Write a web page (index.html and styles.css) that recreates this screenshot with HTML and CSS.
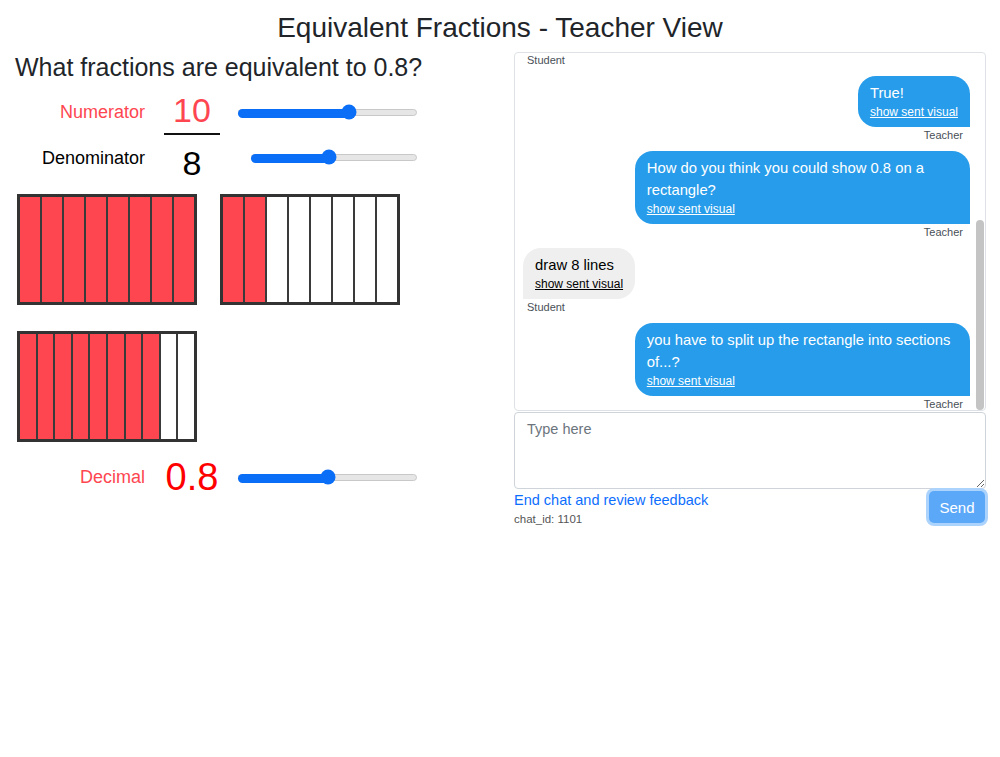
FILE: index.html
```html
<!DOCTYPE html>
<html>
<head>
    <link rel="stylesheet" href="styles.css">
</head>
<body>
    <h1 class="page-title">Equivalent Fractions - Teacher View</h1>

    <div class="main">
        <!-- Left side: fraction controls and bar models -->
        <div class="fraction-panel">
            <h2 class="question">What fractions are equivalent to 0.8?</h2>

            <div class="frac-row num-row">
                <div class="frac-label red-label">Numerator</div>
                <div class="frac-value num-value">10</div>
                <div class="slider-wrap num-slider">
                    <div class="slider">
                        <div class="slider-fill" style="width: 62%"></div>
                        <div class="slider-thumb" style="left: 62%"></div>
                    </div>
                </div>
            </div>
            <div class="frac-line"></div>
            <div class="frac-row den-row">
                <div class="frac-label">Denominator</div>
                <div class="frac-value den-value">8</div>
                <div class="slider-wrap den-slider">
                    <div class="slider">
                        <div class="slider-fill" style="width: 47%"></div>
                        <div class="slider-thumb" style="left: 47%"></div>
                    </div>
                </div>
            </div>

            <div class="bars">
                <div class="bar">
                    <div class="cell on"></div><div class="cell on"></div><div class="cell on"></div><div class="cell on"></div>
                    <div class="cell on"></div><div class="cell on"></div><div class="cell on"></div><div class="cell on"></div>
                </div>
                <div class="bar">
                    <div class="cell on"></div><div class="cell on"></div><div class="cell"></div><div class="cell"></div>
                    <div class="cell"></div><div class="cell"></div><div class="cell"></div><div class="cell"></div>
                </div>
                <div class="bar">
                    <div class="cell on"></div><div class="cell on"></div><div class="cell on"></div><div class="cell on"></div>
                    <div class="cell on"></div><div class="cell on"></div><div class="cell on"></div><div class="cell on"></div>
                    <div class="cell"></div><div class="cell"></div>
                </div>
            </div>

            <div class="frac-row dec-row">
                <div class="frac-label red-label">Decimal</div>
                <div class="frac-value dec-value">0.8</div>
                <div class="slider-wrap dec-slider">
                    <div class="slider">
                        <div class="slider-fill" style="width: 50%"></div>
                        <div class="slider-thumb" style="left: 50%"></div>
                    </div>
                </div>
            </div>
        </div>

        <!-- Right side: chat with the student -->
        <div class="chat-panel">
            <div class="chat-box">
                <div class="chat-scroll">
                    <div class="msg student">
                        <div class="sender first">Student</div>
                    </div>
                    <div class="msg teacher">
                        <div class="bubble">
                            <div class="bubble-text">True!</div>
                            <a class="visual-link">show sent visual</a>
                        </div>
                        <div class="sender">Teacher</div>
                    </div>
                    <div class="msg teacher">
                        <div class="bubble">
                            <div class="bubble-text">How do you think you could show 0.8 on a rectangle?</div>
                            <a class="visual-link">show sent visual</a>
                        </div>
                        <div class="sender">Teacher</div>
                    </div>
                    <div class="msg student">
                        <div class="bubble">
                            <div class="bubble-text">draw 8 lines</div>
                            <a class="visual-link">show sent visual</a>
                        </div>
                        <div class="sender">Student</div>
                    </div>
                    <div class="msg teacher">
                        <div class="bubble">
                            <div class="bubble-text">you have to split up the rectangle into sections of...?</div>
                            <a class="visual-link">show sent visual</a>
                        </div>
                        <div class="sender">Teacher</div>
                    </div>
                </div>
                <div class="scroll-thumb"></div>
            </div>

            <textarea class="chat-input" placeholder="Type here"></textarea>

            <div class="chat-footer">
                <div>
                    <a class="end-link" href="#">End chat and review feedback</a>
                    <div class="chat-id">chat_id: 1101</div>
                </div>
                <button class="send-btn">Send</button>
            </div>
        </div>
    </div>
</body>
</html>
```

FILE: styles.css
```css
body {
    margin: 0;
    font-family: "Liberation Sans", Arial, sans-serif;
    color: #212529;
    background: #fff;
}

.page-title {
    font-size: 28px;
    font-weight: normal;
    line-height: 34px;
    text-align: center;
    margin: 11px 0 7px;
}

.main {
    display: grid;
    grid-template-columns: 500px 472px;
    column-gap: 14px;
}

/* ---------- fraction side ---------- */

.question {
    font-size: 25px;
    font-weight: normal;
    line-height: 30px;
    margin: 0 0 0 15px;
}

.frac-row {
    display: flex;
    align-items: flex-start;
}

.num-row {
    margin-top: 6px;
    height: 44px;
}

.frac-label {
    width: 145px;
    text-align: right;
    font-size: 18px;
    line-height: 44px;
    color: #000;
}

.red-label {
    color: #fe4651;
}

.num-row .frac-label {
    padding-top: 2px;
}

.den-row .frac-label {
    padding-top: 1px;
}

.frac-value {
    width: 56px;
    margin-left: 19px;
    text-align: center;
    font-size: 34px;
    line-height: 44px;
}

.num-value {
    color: #fe4651;
}

.den-value {
    color: #000;
    padding-top: 6px;
}

.frac-line {
    width: 56px;
    height: 2px;
    background: #111;
    margin: 1px 0 0 164px;
}

.slider-wrap {
    height: 44px;
    box-sizing: border-box;
    display: flex;
    align-items: center;
}

.num-slider {
    margin-left: 18px;
    width: 179px;
    padding-top: 4px;
}

.den-slider {
    margin-left: 31px;
    width: 166px;
}

.dec-slider {
    margin-left: 18px;
    width: 179px;
    height: 50px;
}

.slider {
    position: relative;
    width: 100%;
    height: 7px;
    box-sizing: border-box;
    background: #e6e6e6;
    border: 1px solid #c8c8c8;
    border-radius: 4px;
}

.slider-fill {
    height: 9px;
    margin: -1px 0 0 -1px;
    background: #0b6ef6;
    border-radius: 5px;
}

.slider-thumb {
    position: absolute;
    top: 50%;
    width: 15px;
    height: 15px;
    border-radius: 50%;
    background: #0b6ef6;
    transform: translate(-50%, -50%);
}

.bars {
    display: grid;
    grid-template-columns: 180px 180px;
    column-gap: 23px;
    row-gap: 26px;
    margin: 9px 0 0 17px;
}

.bar {
    height: 111px;
    box-sizing: border-box;
    border: 3px solid #333;
    background: #3a3a3a;
    display: flex;
    gap: 2px;
}

.cell {
    flex: 1;
    background: #fff;
}

.cell.on {
    background: #fe4651;
}

.dec-row {
    margin-top: 10px;
}

.dec-row .frac-label {
    line-height: 50px;
}

.dec-value {
    font-size: 38px;
    line-height: 50px;
    color: #ff0000;
}

/* ---------- chat side ---------- */

.chat-box {
    position: relative;
    height: 359px;
    box-sizing: border-box;
    border: 1px solid #dee2e6;
    border-radius: 4px;
    overflow: hidden;
}

.chat-scroll {
    padding: 0 15px 0 8px;
}

.msg {
    display: flex;
    flex-direction: column;
    margin-bottom: 8px;
}

.msg.teacher {
    align-items: flex-end;
}

.msg.student {
    align-items: flex-start;
}

.bubble {
    max-width: 75%;
    box-sizing: border-box;
    padding: 6px 12px 7px 12px;
    font-size: 14.8px;
}

.teacher .bubble {
    background: #269cea;
    color: #fff;
    border-radius: 18px 18px 0 18px;
}

.student .bubble {
    background: #efefef;
    color: #000;
    border-radius: 18px 18px 18px 0;
}

.bubble-text {
    line-height: 22px;
}

.visual-link {
    display: block;
    font-size: 12px;
    line-height: 16px;
    text-decoration: underline;
    cursor: pointer;
}

.sender {
    font-size: 11px;
    line-height: 16px;
    color: #495057;
}

.teacher .sender {
    padding-right: 7px;
}

.student .sender {
    padding-left: 4px;
}

.sender.first {
    margin-top: -1px;
}

.scroll-thumb {
    position: absolute;
    right: 1px;
    top: 167px;
    width: 8px;
    height: 190px;
    border-radius: 4px;
    background: #c4c4c4;
}

.chat-input {
    display: block;
    width: 100%;
    height: 77px;
    box-sizing: border-box;
    margin: 1px 0 0;
    padding: 6px 12px;
    border: 1px solid #ced4da;
    border-radius: 4px;
    font-family: "Liberation Sans", Arial, sans-serif;
    font-size: 14.5px;
    line-height: 1.5;
    color: #212529;
}

.chat-input::placeholder {
    color: #6c757d;
}

.chat-footer {
    display: flex;
    justify-content: space-between;
    align-items: flex-start;
}

.end-link {
    display: block;
    font-size: 14.5px;
    line-height: 22px;
    color: #0d6efd;
    text-decoration: none;
}

.chat-id {
    font-size: 11.5px;
    line-height: 16px;
    color: #555;
}

.send-btn {
    margin: 2px 1px 0 0;
    width: 56px;
    height: 32px;
    border: none;
    border-radius: 5px;
    background: #5ba8f9;
    color: #fff;
    font-family: "Liberation Sans", Arial, sans-serif;
    font-size: 15px;
    box-shadow: 0 0 0 3px #acd3fc;
}
```
